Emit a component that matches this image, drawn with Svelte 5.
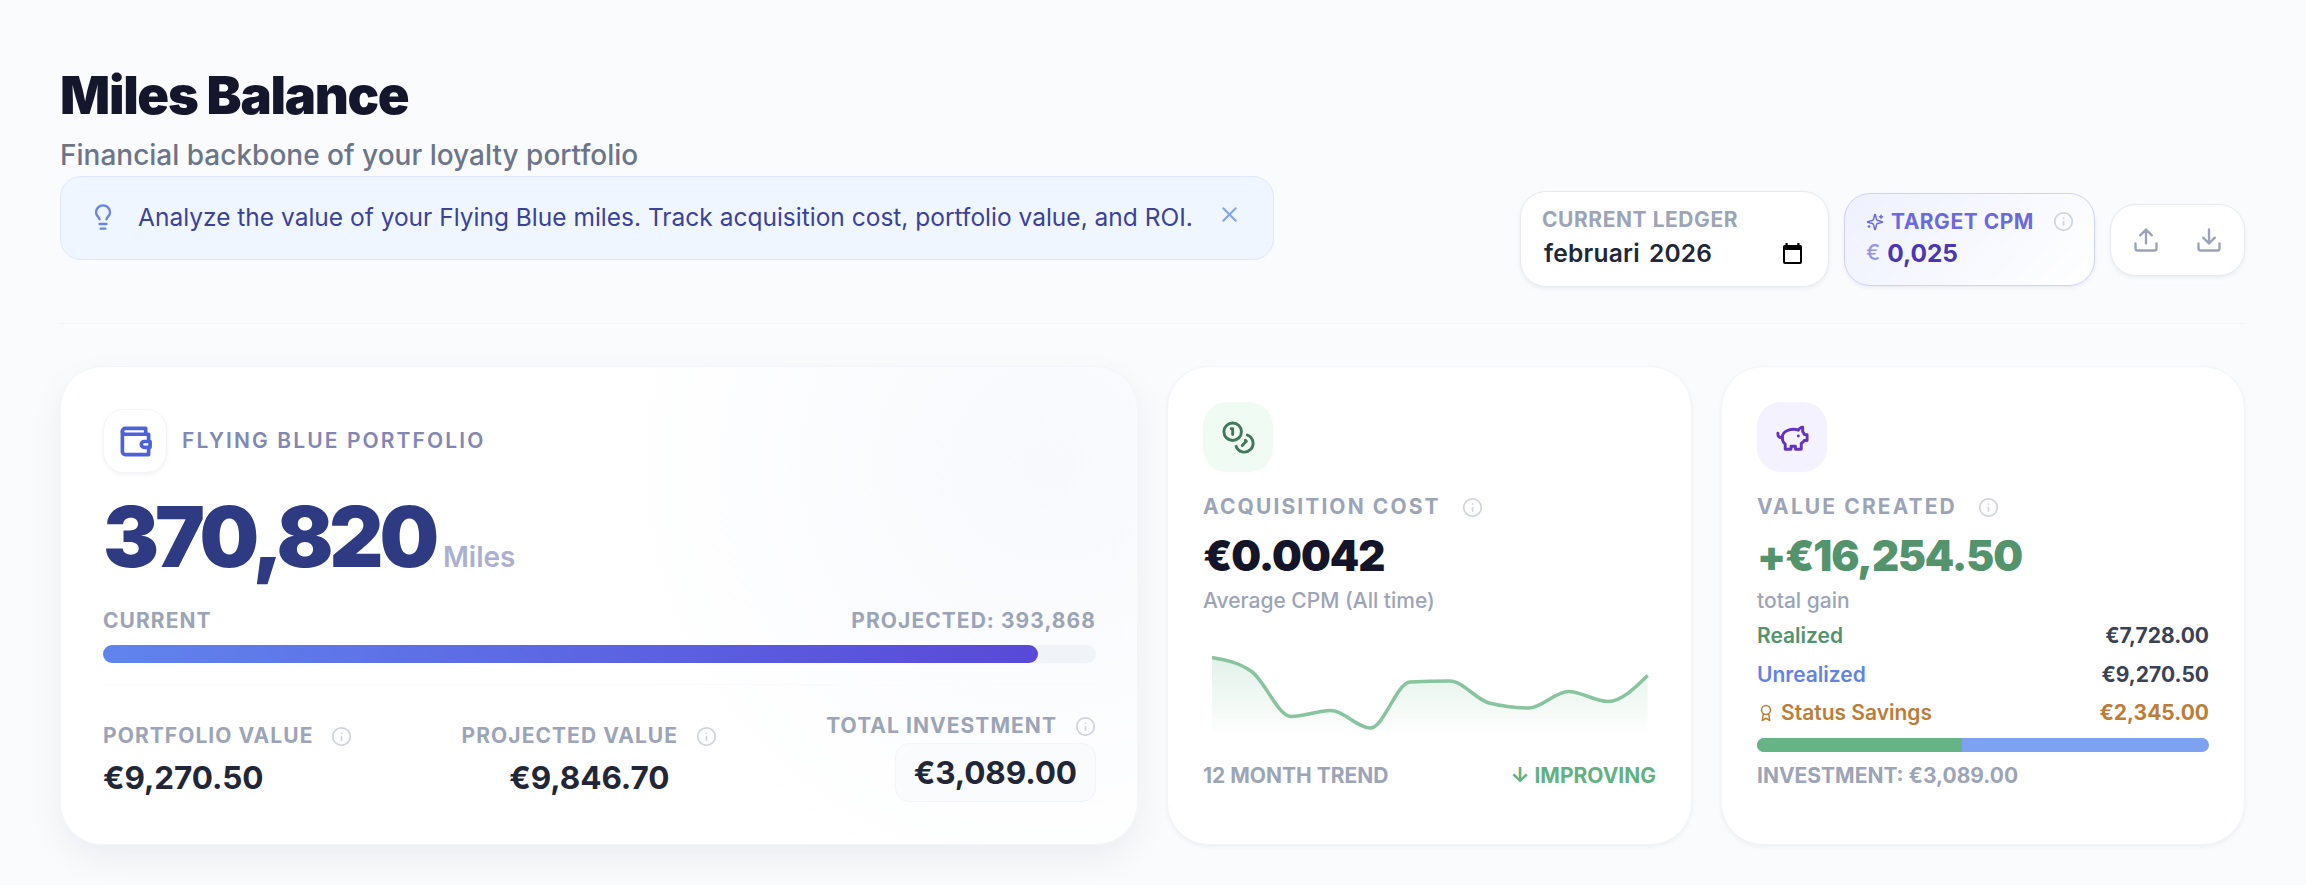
<script lang="ts">
	type Point = [number, number];

	const current = 370820;
	const projected = 393868;
	const realized = 7728;
	const unrealized = 9270.5;

	const progress = (current / projected) * 100;
	const realizedShare = (realized / (realized + unrealized)) * 100;

	const trend = [17.5, 31.5, 76.5, 70.5, 88, 42, 41, 63, 68, 51.5, 61.5, 35.5];
	const baseline = 94;
	const points: Point[] = trend.map((y, i) => [9 + i * 39.6, y]);

	// monotone cubic interpolation, never overshoots the data
	function monotonePath(pts: Point[]) {
		const n = pts.length;
		const slopes: number[] = [];
		for (let i = 0; i < n - 1; i++) {
			slopes.push((pts[i + 1][1] - pts[i][1]) / (pts[i + 1][0] - pts[i][0]));
		}
		const tangents: number[] = new Array(n).fill(0);
		for (let i = 1; i < n - 1; i++) {
			const a = slopes[i - 1];
			const b = slopes[i];
			if (a * b > 0) {
				tangents[i] = Math.sign(a) * Math.min(Math.abs(a), Math.abs(b), Math.abs(a + b) / 4) * 2;
			}
		}
		tangents[0] = (3 * slopes[0] - tangents[1]) / 2;
		tangents[n - 1] = (3 * slopes[n - 2] - tangents[n - 2]) / 2;

		let d = `M${pts[0][0]},${pts[0][1]}`;
		for (let i = 0; i < n - 1; i++) {
			const [x0, y0] = pts[i];
			const [x1, y1] = pts[i + 1];
			const dx = (x1 - x0) / 3;
			d += `C${x0 + dx},${y0 + dx * tangents[i]},${x1 - dx},${y1 - dx * tangents[i + 1]},${x1},${y1}`;
		}
		return d;
	}

	const line = monotonePath(points);
	const area = `${line}L${points[points.length - 1][0]},${baseline}L${points[0][0]},${baseline}Z`;
</script>

{#snippet info()}
	<svg class="info" viewBox="0 0 24 24">
		<circle cx="12" cy="12" r="10" />
		<path d="M12 16v-4M12 8h.01" />
	</svg>
{/snippet}

<main>
	<header>
		<div class="intro">
			<h1>Miles Balance</h1>
			<p class="subtitle">Financial backbone of your loyalty portfolio</p>
			<div class="tip">
				<svg class="bulb" viewBox="0 0 24 24">
					<path d="M15 14c.2-1 .7-1.7 1.5-2.5 1-.9 1.5-2.2 1.5-3.5A6 6 0 0 0 6 8c0 1 .2 2.2 1.5 3.5.7.7 1.3 1.5 1.5 2.5" />
					<path d="M9 18h6M10 22h4" />
				</svg>
				<span>Analyze the value of your Flying Blue miles. Track acquisition cost, portfolio value, and ROI.</span>
				<svg class="close" viewBox="0 0 24 24"><path d="M18 6 6 18M6 6l12 12" /></svg>
			</div>
		</div>

		<div class="controls">
			<div class="ledger">
				<div class="label">CURRENT LEDGER</div>
				<div class="month">
					<span>februari</span>
					<span>2026</span>
					<svg class="calendar" viewBox="0 0 19 21">
						<path fill-rule="evenodd" d="M2.5 0h2.2v2h9.6V0h2.2v2A2 2 0 0 1 19 4v15a2 2 0 0 1-2 2H2a2 2 0 0 1-2-2V4a2 2 0 0 1 2.5-2ZM2 7v12h15V7Z" />
					</svg>
				</div>
			</div>

			<div class="target">
				<div class="target-label">
					<svg class="sparkle" viewBox="0 0 24 24">
						<path d="M9.937 15.5A2 2 0 0 0 8.5 14.063l-6.135-1.582a.5.5 0 0 1 0-.962L8.5 9.936A2 2 0 0 0 9.937 8.5l1.582-6.135a.5.5 0 0 1 .963 0L14.063 8.5A2 2 0 0 0 15.5 9.937l6.135 1.581a.5.5 0 0 1 0 .964L15.5 14.063a2 2 0 0 0-1.437 1.437l-1.582 6.135a.5.5 0 0 1-.963 0z" />
						<path d="M20 3v4M22 5h-4M4 17v2M5 18H3" />
					</svg>
					<span>TARGET CPM</span>
					{@render info()}
				</div>
				<div class="target-value"><span>€</span><strong>0,025</strong></div>
			</div>

			<div class="transfer">
				<svg viewBox="0 0 24 24">
					<path d="M21 15v4a2 2 0 0 1-2 2H5a2 2 0 0 1-2-2v-4M17 8l-5-5-5 5M12 3v12" />
				</svg>
				<svg viewBox="0 0 24 24">
					<path d="M21 15v4a2 2 0 0 1-2 2H5a2 2 0 0 1-2-2v-4M7 10l5 5 5-5M12 15V3" />
				</svg>
			</div>
		</div>
	</header>

	<section class="cards">
		<article class="card portfolio">
			<div class="portfolio-head">
				<div class="tile wallet">
					<svg viewBox="0 0 24 24">
						<path d="M21 12V7H5a2 2 0 0 1 0-4h14v4" />
						<path d="M3 5v14a2 2 0 0 0 2 2h16v-5" />
						<path d="M18 12a2 2 0 0 0 0 4h4v-4Z" />
					</svg>
				</div>
				<span>FLYING BLUE PORTFOLIO</span>
			</div>
			<div class="balance"><strong>370,820</strong><span>Miles</span></div>
			<div class="range">
				<span>CURRENT</span>
				<span>PROJECTED: 393,868</span>
			</div>
			<div class="track"><div class="fill" style="width: {progress}%"></div></div>
			<div class="stats">
				<div class="stat">
					<div class="stat-label"><span>PORTFOLIO VALUE</span>{@render info()}</div>
					<div class="stat-value">€9,270.50</div>
				</div>
				<div class="stat center">
					<div class="stat-label"><span>PROJECTED VALUE</span>{@render info()}</div>
					<div class="stat-value">€9,846.70</div>
				</div>
				<div class="stat end">
					<div class="stat-label"><span>TOTAL INVESTMENT</span>{@render info()}</div>
					<div class="stat-value boxed">€3,089.00</div>
				</div>
			</div>
		</article>

		<article class="card">
			<div class="tile coins">
				<svg viewBox="0 0 24 24">
					<circle cx="8" cy="8" r="6" />
					<path d="M18.09 10.37A6 6 0 1 1 10.34 18M7 6h1v4M16.71 13.88l.7.71-2.82 2.82" />
				</svg>
			</div>
			<div class="card-label"><span>ACQUISITION COST</span>{@render info()}</div>
			<div class="amount">€0.0042</div>
			<div class="note">Average CPM (All time)</div>
			<svg class="chart" viewBox="0 0 453 105">
				<defs>
					<linearGradient id="trend-fill" x1="0" y1="0" x2="0" y2="1">
						<stop offset="0" stop-color="#5fb583" stop-opacity="0.18" />
						<stop offset="1" stop-color="#5fb583" stop-opacity="0.01" />
					</linearGradient>
				</defs>
				<path d={area} fill="url(#trend-fill)" />
				<path class="trend-line" d={line} />
			</svg>
			<div class="card-foot">
				<span>12 MONTH TREND</span>
				<span class="improving">↓ IMPROVING</span>
			</div>
		</article>

		<article class="card">
			<div class="tile piggy">
				<svg viewBox="0 0 24 24">
					<path d="M19 5c-1.5 0-2.8 1.4-3 2-3.5-1.5-11-.3-11 5 0 1.8 0 3 2 4.5V20h4v-2h3v2h4v-4c1-.5 1.7-1 2-2h2v-4h-2c0-1-.5-1.5-1-2V5z" />
					<path d="M2 9v1c0 1.1.9 2 2 2h1M16 11h.01" />
				</svg>
			</div>
			<div class="card-label"><span>VALUE CREATED</span>{@render info()}</div>
			<div class="amount gain">+€16,254.50</div>
			<div class="note">total gain</div>
			<div class="rows">
				<div class="row realized"><span>Realized</span><strong>€7,728.00</strong></div>
				<div class="row unrealized"><span>Unrealized</span><strong>€9,270.50</strong></div>
				<div class="row savings">
					<span>
						<svg viewBox="0 0 24 24">
							<circle cx="12" cy="8" r="6" />
							<path d="M15.477 12.89 17 22l-5-3-5 3 1.523-9.11" />
						</svg>
						Status Savings
					</span>
					<strong>€2,345.00</strong>
				</div>
			</div>
			<div class="split"><div class="split-realized" style="width: {realizedShare}%"></div></div>
			<div class="card-foot"><span>INVESTMENT: €3,089.00</span></div>
		</article>
	</section>
</main>

<style>
	:global(body) {
		background: #fafbfd;
	}

	main {
		box-sizing: border-box;
		height: 885px;
		padding: 63px 61px 0 60px;
		overflow: hidden;
		font-family: Inter, 'Liberation Sans', sans-serif;
		font-size: 21px;
		line-height: 28px;
		color: #9ca4b7;
	}

	main * {
		box-sizing: border-box;
	}

	svg {
		display: block;
		flex: none;
		fill: none;
		stroke: currentColor;
		stroke-width: 2;
		stroke-linecap: round;
		stroke-linejoin: round;
	}

	span,
	strong {
		white-space: nowrap;
	}

	header {
		display: flex;
		justify-content: space-between;
		align-items: flex-end;
		height: 261px;
		padding-bottom: 36px;
		border-bottom: 1px solid #f1f3f7;
	}

	.intro {
		margin-bottom: 27px;
	}

	h1 {
		margin: 0 0 7px;
		font-size: 52.5px;
		line-height: 64px;
		font-weight: 900;
		letter-spacing: -1.3px;
		color: #14162b;
	}

	.subtitle {
		margin: 0;
		font-size: 28px;
		line-height: 42px;
		font-weight: 500;
		color: #6c7589;
	}

	.tip {
		display: flex;
		align-items: center;
		width: 1214px;
		height: 84px;
		padding: 0 31px 2px 28px;
		border: 1px solid #dfe6fb;
		border-radius: 21px;
		background: #f0f6ff;
		font-size: 24.5px;
		color: #3b429b;
	}

	.bulb {
		width: 28px;
		height: 28px;
		margin-right: 21px;
		color: #6586e6;
	}

	.close {
		width: 25px;
		height: 25px;
		margin: 0 0 6px auto;
		color: #82a5ec;
	}

	.controls {
		display: flex;
		align-items: center;
		gap: 15px;
	}

	.ledger,
	.target,
	.transfer {
		border: 1px solid #e7eaf0;
		border-radius: 26px;
		background: #fff;
		box-shadow: 0 2px 4px rgba(15, 23, 42, 0.06);
	}

	.ledger {
		width: 309px;
		height: 96px;
		padding: 14px 26px 0 21px;
	}

	.label {
		font-weight: 700;
		letter-spacing: 0.55px;
	}

	.month {
		display: flex;
		align-items: center;
		gap: 9px;
		padding: 5px 0 0 2px;
		font-size: 24.5px;
		font-weight: 600;
		letter-spacing: 0.25px;
		color: #222738;
	}

	.calendar {
		width: 19px;
		height: 21px;
		margin-left: auto;
		fill: #000;
		stroke: none;
	}

	.target {
		width: 251px;
		height: 93px;
		padding: 14px 20px 0 21px;
		border-color: #cdd2f8;
		background: linear-gradient(135deg, #eef1fe, #fff);
	}

	.target-label {
		display: flex;
		align-items: center;
		font-weight: 700;
		letter-spacing: 0.5px;
		color: #6c69dc;
	}

	.target-label .info {
		margin-left: auto;
	}

	.sparkle {
		width: 18px;
		height: 18px;
		margin-right: 7px;
	}

	.target-value {
		display: flex;
		align-items: center;
		gap: 7px;
		padding-top: 3px;
		font-size: 24.5px;
		color: #4b37b0;
	}

	.target-value span {
		font-size: 21px;
		font-weight: 500;
		color: #9694e2;
	}

	.target-value strong {
		font-weight: 700;
	}

	.info {
		width: 21px;
		height: 21px;
		color: #d0d4df;
	}

	.transfer {
		display: flex;
		align-items: center;
		justify-content: center;
		gap: 35px;
		width: 135px;
		height: 72px;
		margin-top: 1px;
		color: #9aa3b6;
	}

	.transfer svg {
		width: 28px;
		height: 28px;
	}

	.cards {
		display: grid;
		grid-template-columns: 1078px 1fr 1fr;
		gap: 29px;
		height: 479px;
		margin-top: 42px;
	}

	.card {
		padding: 35px;
		border: 1px solid #f3f5f8;
		border-radius: 42px;
		background: #fff;
		box-shadow: 0 2px 4px rgba(15, 23, 42, 0.05);
	}

	.portfolio {
		padding: 42px 41px 0 42px;
		background: radial-gradient(circle at 986px 97px, #f7f9fd, #fbfcfe 220px, #fff 450px);
		box-shadow: 0 14px 35px rgba(15, 23, 42, 0.06);
	}

	.tile {
		display: flex;
		align-items: center;
		justify-content: center;
		width: 70px;
		height: 70px;
		border-radius: 24px;
	}

	.tile svg {
		width: 35px;
		height: 35px;
	}

	.wallet {
		width: 64px;
		height: 64px;
		border: 1px solid #f3f5fa;
		border-radius: 21px;
		background: #fff;
		box-shadow: 0 2px 4px rgba(15, 23, 42, 0.05);
		color: #4d62d9;
	}

	.wallet svg {
		stroke-width: 2.5;
	}

	.coins {
		background: #f0fbf4;
		color: #417a5b;
	}

	.piggy {
		background: #f4f2fe;
		color: #6433bd;
	}

	.portfolio-head {
		display: flex;
		align-items: center;
		gap: 15px;
		font-weight: 600;
		letter-spacing: 2.1px;
		color: #8287b4;
	}

	.balance {
		display: flex;
		align-items: baseline;
		gap: 8px;
		height: 84px;
		margin-top: 22px;
		line-height: 84px;
		color: #2e3a82;
	}

	.balance strong {
		font-size: 84px;
		font-weight: 900;
		letter-spacing: -4.2px;
	}

	.balance span {
		font-size: 28px;
		font-weight: 600;
		color: #acb0d0;
	}

	.range {
		display: flex;
		justify-content: space-between;
		margin-top: 28px;
		font-weight: 700;
		letter-spacing: 1.05px;
	}

	.track {
		height: 18px;
		margin-top: 10px;
		border-radius: 9px;
		background: #f0f3f8;
	}

	.fill {
		height: 100%;
		border-radius: 9px;
		background: linear-gradient(90deg, #6084ed, #5849d8);
	}

	.stats {
		display: flex;
		justify-content: space-between;
		align-items: flex-end;
		height: 118px;
		margin-top: 21px;
		border-top: 1px solid #fbfbfd;
	}

	.stat {
		display: flex;
		flex-direction: column;
	}

	.center {
		align-items: center;
	}

	.end {
		align-items: flex-end;
	}

	.stat-label {
		display: flex;
		align-items: center;
		gap: 18px;
		font-weight: 700;
		letter-spacing: 1.05px;
	}

	.stat-value {
		margin-top: 3px;
		font-size: 31.5px;
		line-height: 49px;
		font-weight: 700;
		letter-spacing: -0.1px;
		color: #222738;
	}

	.boxed {
		padding: 4px 18px;
		border: 1px solid #f2f4f8;
		border-radius: 14px;
		line-height: 49px;
		background: #fafbfd;
	}

	.card-label {
		display: flex;
		align-items: center;
		gap: 21px;
		margin-top: 21px;
		font-weight: 700;
		letter-spacing: 2.1px;
	}

	.amount {
		margin-top: 14px;
		font-size: 42px;
		line-height: 42px;
		font-weight: 900;
		letter-spacing: -1.05px;
		color: #14152b;
	}

	.gain {
		letter-spacing: -1.1px;
		color: #53946d;
	}

	.note {
		margin-top: 10px;
		font-weight: 500;
	}

	.chart {
		width: 453px;
		height: 105px;
		margin: 25px 0 17px;
		stroke: none;
	}

	.trend-line {
		stroke: #87c49f;
		stroke-width: 3.5;
		stroke-linecap: butt;
	}

	.card-foot {
		display: flex;
		justify-content: space-between;
		font-weight: 700;
	}

	.improving {
		color: #62b182;
	}

	.rows {
		display: flex;
		flex-direction: column;
		gap: 10.5px;
		margin-top: 7px;
	}

	.row {
		display: flex;
		justify-content: space-between;
		font-weight: 600;
	}

	.row span {
		display: flex;
		align-items: center;
	}

	.row strong {
		font-weight: 700;
		color: #3a4256;
	}

	.row svg {
		width: 18px;
		height: 18px;
		margin-right: 6px;
	}

	.realized {
		color: #53946d;
	}

	.unrealized {
		color: #6283e5;
	}

	.savings,
	.row.savings strong {
		color: #bd7d37;
	}

	.split {
		height: 14px;
		margin: 11px 0 10px;
		border-radius: 7px;
		overflow: hidden;
		background: #7da2f1;
	}

	.split-realized {
		height: 100%;
		background: #66b485;
	}
</style>
